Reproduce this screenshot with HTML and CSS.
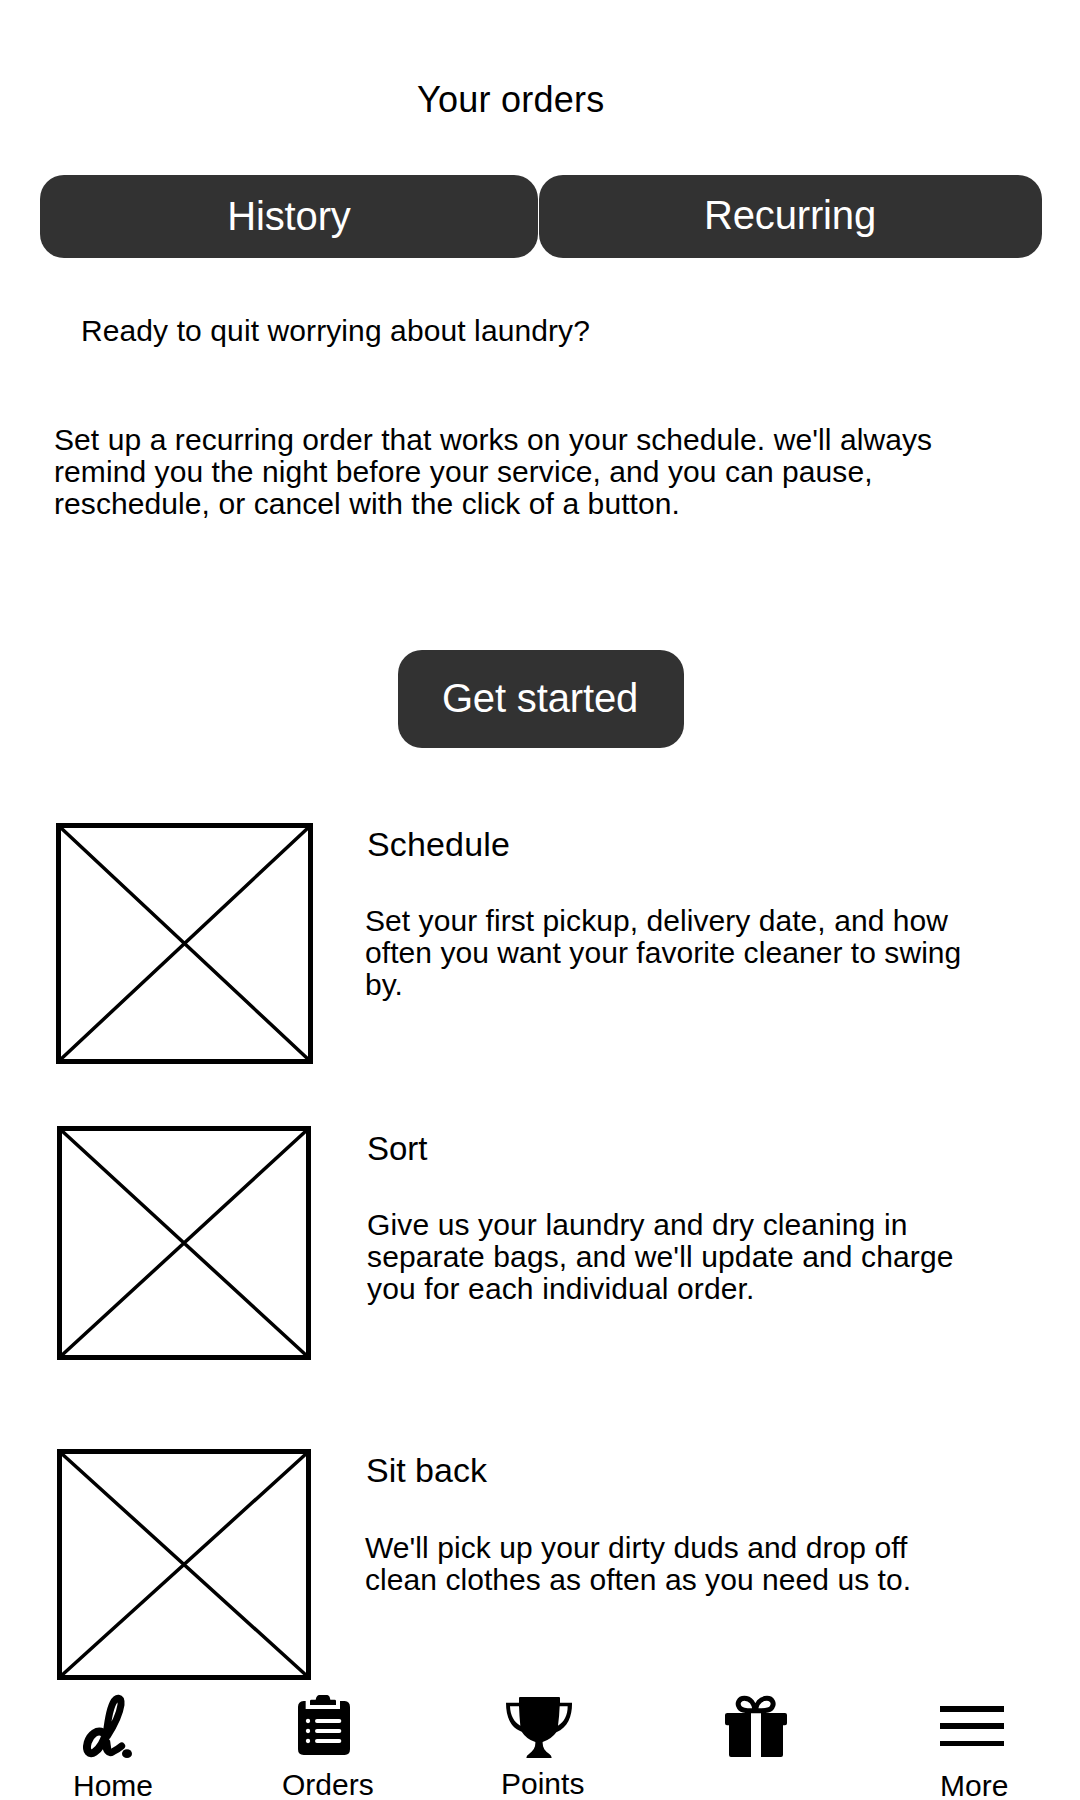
FILE: index.html
```html
<!DOCTYPE html>
<html lang="en">
<head>
<meta charset="utf-8">
<title>Your orders</title>
<link rel="stylesheet" href="styles.css">
</head>
<body>
<main class="screen">
  <h1 class="title">Your orders</h1>
  <div class="tabs">
    <button class="tab">History</button>
    <button class="tab tab-recurring">Recurring</button>
  </div>
  <h2 class="question">Ready to quit worrying about laundry?</h2>
  <p class="intro">Set up a recurring order that works on your schedule. we'll always<br>remind you the night before your service, and you can pause,<br>reschedule, or cancel with the click of a button.</p>
  <button class="start">Get started</button>

  <section class="steps">
    <article class="step step-schedule">
      <svg class="picture" width="257" height="241" viewBox="0 0 257 241"><path class="frame" d="M2.5 2.5H254.5V238.5H2.5Z"/><path class="cross" d="M4 4L253 237M253 4L4 237"/></svg>
      <div class="text">
        <h3 class="name">Schedule</h3>
        <p class="copy">Set your first pickup, delivery date, and how<br>often you want your favorite cleaner to swing<br>by.</p>
      </div>
    </article>
    <article class="step step-sort">
      <svg class="picture" width="254" height="234" viewBox="0 0 254 234"><path class="frame" d="M2.5 2.5H251.5V231.5H2.5Z"/><path class="cross" d="M4 4L250 230M250 4L4 230"/></svg>
      <div class="text">
        <h3 class="name">Sort</h3>
        <p class="copy">Give us your laundry and dry cleaning in<br>separate bags, and we'll update and charge<br>you for each individual order.</p>
      </div>
    </article>
    <article class="step step-back">
      <svg class="picture" width="254" height="231" viewBox="0 0 254 231"><path class="frame" d="M2.5 2.5H251.5V228.5H2.5Z"/><path class="cross" d="M4 4L250 227M250 4L4 227"/></svg>
      <div class="text">
        <h3 class="name">Sit back</h3>
        <p class="copy">We'll pick up your dirty duds and drop off<br>clean clothes as often as you need us to.</p>
      </div>
    </article>
  </section>

  <nav class="nav">
    <a class="item home">
      <svg class="icon" viewBox="0 0 360 264"><g fill="none" stroke="#000" stroke-linecap="round" stroke-linejoin="round"><path stroke-width="24" d="M128 157C112 149 91 162 83 188C76 214 89 226 104 216C121 205 131 186 138 160"/><path stroke-width="21" d="M142 168C160 140 179 101 183 74C185 49 169 49 159 69C146 95 140 148 137 181C135 213 146 223 159 215C169 210 178 204 185 198"/></g><path d="M128 186L138 220L156 222L150 180Z"/><ellipse cx="201" cy="221" rx="15" ry="13"/></svg>
      <span class="label">Home</span>
    </a>
    <a class="item orders">
      <svg class="icon" viewBox="0 0 360 264"><path d="M107 63H101Q84 65 84 81V208Q84 225 101 225H224Q240 225 240 208V81Q240 65 224 63H210V87H107Z"/><path d="M120 75V63Q120 59 124 59H137Q140 45 148 45H172Q179 46 181 59H194Q198 59 198 63V75Z"/><g stroke="#fff" stroke-width="12" stroke-linecap="round"><path d="M141 123H208M141 153H208M141 183H208"/></g><g fill="#fff"><circle cx="114" cy="123" r="6.5"/><circle cx="114" cy="153" r="6.5"/><circle cx="114" cy="183" r="6.5"/></g></svg>
      <span class="label">Orders</span>
    </a>
    <a class="item points">
      <svg class="icon" viewBox="0 0 360 264"><path d="M117 54Q117 51 120 51H237Q240 51 240 54V68H276C277 105 265 143 229 157Q214 178 188 186C187 201 194 213 208 222Q215 226 215 234H139Q139 226 147 222C161 212 167 201 166 186Q140 178 125 155C90 143 78 108 78 68H117Z"/><path fill="#fff" d="M90 79H117Q118 108 121 137C101 126 91 105 90 79ZM239 79H263C263 105 253 126 234 137Q238 108 239 79Z"/></svg>
      <span class="label">Points</span>
    </a>
    <a class="item gift">
      <svg class="icon" viewBox="0 0 360 264"><path d="M82 99H255Q261 99 261 105V130Q261 136 255 136H249V225Q249 231 243 231H93Q87 231 87 225V136H81Q75 136 75 130V105Q75 99 82 99Z"/><path fill="#fff" d="M153 99H183V232H153Z"/><path fill="none" stroke="#000" stroke-width="15" d="M166 92C163 71 151 55 133 55C117 55 110 70 118 82C126 94 146 93 166 92C169 71 181 55 201 55C217 55 224 70 216 82C208 94 187 93 166 92Z"/></svg>
    </a>
    <a class="item more">
      <svg class="icon" viewBox="0 0 360 264"><path d="M60 78H252V96H60ZM60 129H252V147H60ZM60 183H252V198H60Z"/></svg>
      <span class="label">More</span>
    </a>
  </nav>
</main>
</body>
</html>
```
FILE: styles.css
```css
* { box-sizing: border-box; }
body { margin: 0; background: #fff; color: #000; font-family: "Liberation Sans", Arial, sans-serif; }
h1, h2, h3, p { margin: 0; font-weight: 400; white-space: nowrap; }
button { border: 0; padding: 0; background: #323232; color: #fff; font: 400 40px/46px "Liberation Sans", Arial, sans-serif; letter-spacing: -.15px; }

.screen { width: 1080px; height: 1800px; display: flex; flex-direction: column; }
.title { margin: 80px 0 0 417px; height: 95px; font-size: 36px; line-height: 40px; letter-spacing: .25px; }
.tabs { display: grid; grid-template-columns: 498px 503px; gap: 1px; margin-left: 40px; height: 83px; }
.tab { border-radius: 24px; padding-bottom: 2px; }
.tab-recurring { padding: 0 1px 4px 0; }
.question { margin: 57px 0 0 81px; height: 108px; font-size: 30px; line-height: 32px; letter-spacing: .1px; }
.intro { margin-left: 54px; height: 227px; padding-top: 1px; font-size: 30px; line-height: 32px; letter-spacing: .08px; }
.start { margin-left: 398px; width: 286px; height: 98px; flex: none; border-radius: 24px; padding: 0 2px 2px 0; }

.steps { height: 932px; padding-top: 75px; flex: none; }
.step { display: flex; align-items: flex-start; }
.picture { flex: none; margin-left: 57px; }
.frame { fill: none; stroke: #000; stroke-width: 5; }
.cross { fill: none; stroke: #000; stroke-width: 3.5; }
.name { font-size: 34px; line-height: 38px; }
.copy { font-size: 30px; line-height: 32px; letter-spacing: .06px; }
.step-schedule { height: 303px; }
.step-schedule .picture { margin-left: 56px; }
.step-schedule .text { padding: 2px 0 0 52px; }
.step-schedule .name { padding-left: 2px; margin-bottom: 42px; letter-spacing: .15px; }
.step-sort { height: 323px; }
.step-sort .text { padding: 4px 0 0 56px; }
.step-sort .name { font-size: 33px; margin-bottom: 41px; }
.step-sort .copy { letter-spacing: .13px; }
.step-back .text { padding: 2px 0 0 54px; }
.step-back .name { padding-left: 1px; margin-bottom: 43px; }

.nav { display: grid; grid-template-columns: 210px 210px 220px 220px 160px; padding-left: 60px; height: 120px; flex: none; }
.item { display: flex; flex-direction: column; width: 120px; }
.icon { width: 120px; height: 88px; flex: none; }
.label { font-size: 30px; line-height: 28px; padding-left: 13px; margin-top: 4px; }
.orders .label { margin-top: 3px; padding-left: 12px; }
.points .label { margin-top: 2px; padding-left: 21px; }
.more .label { padding-left: 20px; }
```
